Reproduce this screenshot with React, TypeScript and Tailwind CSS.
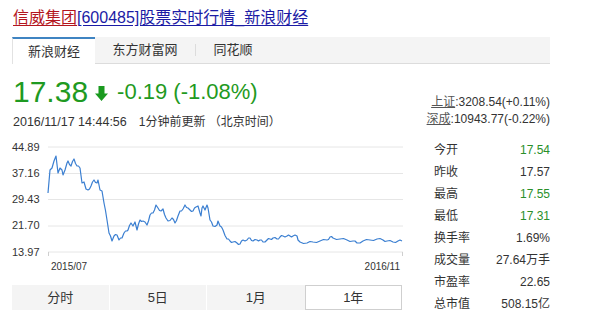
const font = { fontFamily: '"Liberation Sans", "Noto Sans CJK SC", sans-serif' };

// traced from the 1年 chart, page coordinates
const raw = [
  48, 190, 50, 167, 52, 165, 56, 153, 58, 170, 60, 165, 62, 167, 63, 172, 67, 160, 68, 158, 71, 163, 74, 156,
  77, 163, 80, 165, 82, 180, 84, 179, 86, 186, 88, 187, 91, 183, 94, 177, 97, 180, 98, 177, 100, 187, 102, 188,
  104, 200, 107, 217, 109, 230, 112, 238, 114, 233, 117, 232, 119, 237, 122, 235, 124, 230, 127, 228, 128, 227,
  131, 220, 133, 223, 135, 219, 137, 227, 140, 217, 143, 218, 147, 222, 150, 212, 153, 210, 156, 202, 158, 205,
  161, 208, 163, 206, 166, 215, 168, 218, 172, 215, 175, 220, 178, 213, 180, 208, 183, 206, 185, 202, 188, 205,
  190, 207, 193, 208, 196, 204, 198, 203, 200, 210, 201, 213, 202, 205, 203, 203, 205, 207, 207, 202, 208, 205,
  210, 217, 213, 223, 217, 222, 218, 218, 220, 223, 223, 227, 227, 236, 230, 238, 233, 239, 237, 240, 240, 241,
  243, 237, 247, 237, 250, 235, 253, 238, 257, 237, 260, 237, 263, 239, 267, 237, 270, 236, 273, 235, 277, 236,
  280, 234, 283, 233, 287, 233, 290, 233, 293, 233, 297, 233, 298, 237, 300, 239, 307, 240, 313, 239, 320, 238,
  327, 237, 330, 234, 333, 235, 340, 236, 347, 237, 353, 238, 357, 240, 363, 238, 370, 237, 377, 236, 383, 237,
  387, 238, 393, 239, 398, 238, 402, 238,
];

const pts: string[] = [];
for (let i = 0; i < raw.length; i += 2) {
  const x = raw[i] - 47;
  const y = raw[i + 1] - 131;
  if (i > 0) {
    const px = raw[i - 2] - 47;
    const py = raw[i - 1] - 131;
    if (x - px >= 3) {
      const mx = (x + px) / 2;
      const my = (y + py) / 2 + (i % 4 === 0 ? 1 : -1);
      pts.push(`${mx.toFixed(1)},${my.toFixed(1)}`);
    }
  }
  pts.push(`${x},${y}`);
}

const stats = [
  { label: "今开", value: "17.54", green: true },
  { label: "昨收", value: "17.57" },
  { label: "最高", value: "17.55", green: true },
  { label: "最低", value: "17.31", green: true },
  { label: "换手率", value: "1.69%" },
  { label: "成交量", value: "27.64万手" },
  { label: "市盈率", value: "22.65" },
  { label: "总市值", value: "508.15亿" },
];

const yLabels = ["44.89", "37.16", "29.43", "21.70", "13.97"];
const grid = [13, 39.5, 65.5, 92, 118];

function Tabs() {
  return (
    <div className="ml-[12px] mt-[9px] flex h-[27px] w-[538px] border-b border-[#dcdcdc] bg-[#f4f4f4] text-[13px] text-[#333]">
      <div className="-mb-px flex w-[83px] items-center justify-center border-l border-t-2 border-l-[#e2e2e2] border-t-[#3f84c2] bg-white">
        新浪财经
      </div>
      <div className="flex w-[100px] items-center justify-center">东方财富网</div>
      <div className="my-[7px] w-px bg-[#dcdcdc]" />
      <div className="flex w-[74px] items-center justify-center">同花顺</div>
    </div>
  );
}

function Chart() {
  return (
    <div>
      <div className="flex">
        <div className="flex h-[125px] w-[35px] shrink-0 flex-col text-[11px] text-[#333]">
          {yLabels.map((l) => (
            <div key={l} className="flex h-[26.25px] shrink-0 items-center leading-none">
              {l}
            </div>
          ))}
        </div>
        <svg width="357" height="125" className="overflow-visible">
          {grid.map((y) => (
            <line key={y} x1="1" x2="356" y1={y} y2={y} stroke="#e6e6e6" strokeWidth="1" />
          ))}
          <line x1="1.5" x2="1.5" y1="118" y2="122" stroke="#cfcfcf" />
          <line x1="355.5" x2="355.5" y1="118" y2="122" stroke="#cfcfcf" />
          <polyline points={pts.join(" ")} fill="none" stroke="#3b7fd1" strokeWidth="1.2" strokeLinejoin="round" />
        </svg>
      </div>
      <div className="flex w-[388px] justify-between pl-[39px] pt-[2px] text-[10px] leading-[12px] text-[#333]">
        <span>2015/07</span>
        <span>2016/11</span>
      </div>
      <div className="mt-[12px] grid h-[25px] w-[390px] grid-cols-4 text-[13px] text-[#333]">
        <div className="flex items-center justify-center border-r border-white bg-[#f4f4f4]">分时</div>
        <div className="flex items-center justify-center border-r border-white bg-[#f4f4f4]">5日</div>
        <div className="flex items-center justify-center bg-[#f4f4f4]">1月</div>
        <div className="flex items-center justify-center border border-[#cfcfcf] bg-white">1年</div>
      </div>
    </div>
  );
}

export default function App() {
  return (
    <div className="h-[316px] w-[601px] overflow-hidden bg-white" style={font}>
      <div className="pl-[13px] pt-[8px] text-[16px] leading-[20px]">
        <span className="text-[#b3151d] underline underline-offset-2">信威集团</span>
        <span className="text-[#1b1ba5] underline underline-offset-2">[600485]股票实时行情_新浪财经</span>
      </div>
      <Tabs />

      <div className="ml-[12px] flex w-[538px] items-start justify-between">
        <div className="pl-px pt-[10px]">
          <div className="flex items-center text-[#1f9a22]">
            <span className="text-[30px] leading-[34px]">17.38</span>
            <svg width="13" height="15" viewBox="0 0 13 15" className="ml-[7px] mt-[3px]">
              <path d="M3.5 0h6v7.5H13L6.5 15 0 7.5h3.5z" fill="#1a9a1f" />
            </svg>
            <span className="ml-[9px] mt-[1px] text-[22px] leading-[34px]">-0.19 (-1.08%)</span>
          </div>
          <div className="mt-[5px] flex text-[12px] leading-[16px] text-[#333]">
            <span className="text-[12.5px]">2016/11/17 14:44:56</span>
            <span className="ml-[12px]">1分钟前更新 （北京时间）</span>
          </div>
        </div>
        <div className="pt-[30px] text-right text-[12px] leading-[17px] text-[#333]">
          <div>
            <span className="text-[#555] underline">上证</span>:3208.54(+0.11%)
          </div>
          <div>
            <span className="text-[#555] underline">深成</span>:10943.77(-0.22%)
          </div>
        </div>
      </div>

      <div className="ml-[12px] mt-[4px] flex w-[538px]">
        <div className="w-[422px]">
          <Chart />
        </div>
        <div className="w-[116px] pt-[5px] text-[12px] text-[#333]">
          {stats.map((s) => (
            <div key={s.label} className="flex h-[22px] items-center justify-between">
              <span>{s.label}</span>
              <span className={s.green ? "text-[#2a8f2a]" : "text-[#333]"}>{s.value}</span>
            </div>
          ))}
        </div>
      </div>
    </div>
  );
}
